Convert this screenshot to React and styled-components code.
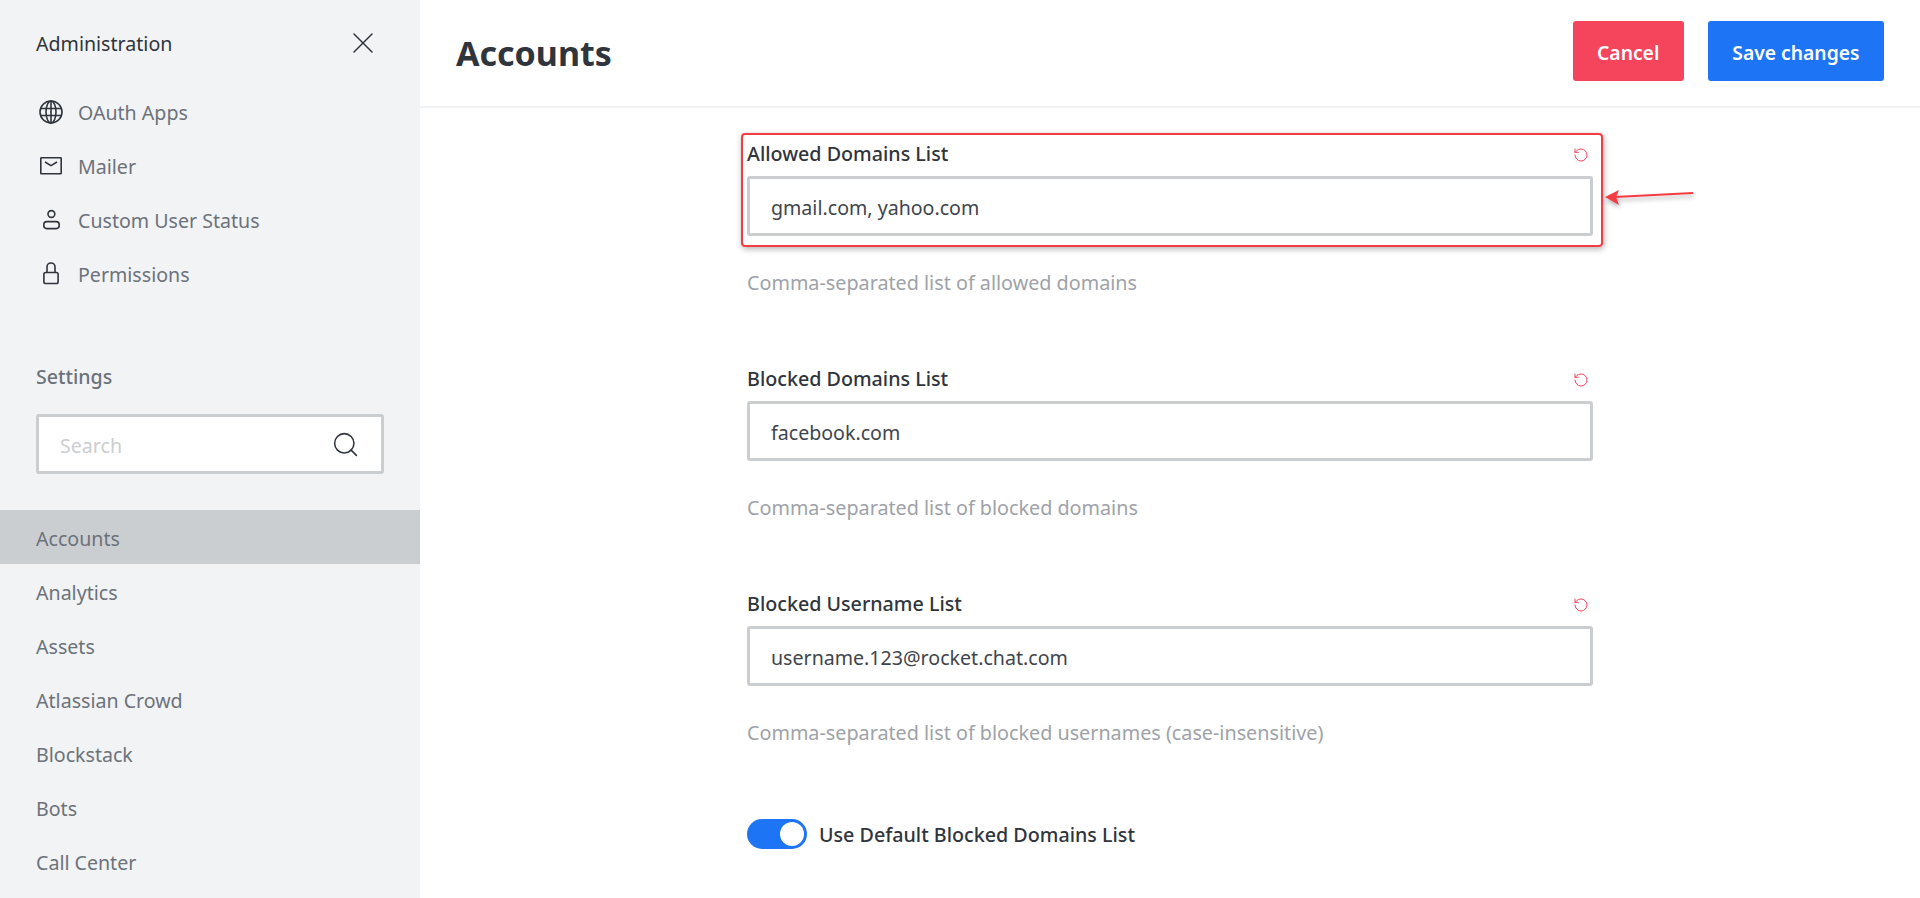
import React from 'react';
import styled, { createGlobalStyle } from 'styled-components';
import { X, Search, RotateCcw } from 'lucide-react';

const GlobalStyle = createGlobalStyle`
  html, body { margin: 0; padding: 0; height: 100%; overflow: hidden; background: #fff; }
  body { font-family: "Noto Sans", "Open Sans", "Liberation Sans", sans-serif; color: #2f343d; }
  * { box-sizing: border-box; }
`;

const adminItems = ['OAuth Apps', 'Mailer', 'Custom User Status', 'Permissions'];
const settingItems = ['Accounts', 'Analytics', 'Assets', 'Atlassian Crowd', 'Blockstack', 'Bots', 'Call Center'];
const fields = [
  { label: 'Allowed Domains List', value: 'gmail.com, yahoo.com', hint: 'Comma-separated list of allowed domains', marked: true },
  { label: 'Blocked Domains List', value: 'facebook.com', hint: 'Comma-separated list of blocked domains' },
  { label: 'Blocked Username List', value: 'username.123@rocket.chat.com', hint: 'Comma-separated list of blocked usernames (case-insensitive)' },
];

function GlobeIcon() {
  return (
    <svg width="24" height="24" viewBox="0 0 24 24" fill="none" stroke="#2f343d" strokeWidth="1.6" overflow="visible">
      <circle cx="13" cy="12" r="11" />
      <ellipse cx="13" cy="12" rx="5" ry="11" />
      <path d="M13 1v22M3 8.5h20M3 15.5h20" />
    </svg>
  );
}

function MailIcon() {
  return (
    <svg width="24" height="24" viewBox="0 0 24 24" fill="none" stroke="#2f343d" strokeWidth="1.6">
      <rect x="2.8" y="3.8" width="20.4" height="16" rx="0.6" />
      <path d="M7 8l6 3.6L19 8" />
    </svg>
  );
}

function UserIcon() {
  return (
    <svg width="24" height="24" viewBox="0 0 24 24" fill="none" stroke="#2f343d" strokeWidth="1.6">
      <circle cx="13.4" cy="6" r="3.4" />
      <rect x="5.8" y="13.6" width="15.4" height="7" rx="3" />
    </svg>
  );
}

function LockIcon() {
  return (
    <svg width="24" height="24" viewBox="0 0 24 24" fill="none" stroke="#2f343d" strokeWidth="1.6">
      <rect x="5.9" y="10.5" width="14.2" height="11" rx="1.8" />
      <path d="M9 10.5V5a4 4 0 0 1 8 0v5.5" />
    </svg>
  );
}

const adminIcons = [<GlobeIcon key="g" />, <MailIcon key="m" />, <UserIcon key="u" />, <LockIcon key="l" />];

export default function App() {
  return (
    <Page>
      <GlobalStyle />
      <Sidebar>
        <AdminHeader>
          <span>Administration</span>
          <X size={36} strokeWidth={1} color="#2f343d" />
        </AdminHeader>
        <AdminList>
          {adminItems.map((item, i) => (
            <AdminRow key={item}>
              <IconSlot>{adminIcons[i]}</IconSlot>
              {item}
            </AdminRow>
          ))}
        </AdminList>
        <SectionTitle>Settings</SectionTitle>
        <SearchBox>
          <SearchText>Search</SearchText>
          <Search size={29} strokeWidth={1.3} color="#2f343d" />
        </SearchBox>
        <SettingList>
          {settingItems.map((item, i) => (
            <SettingRow key={item} $active={i === 0}>{item}</SettingRow>
          ))}
        </SettingList>
      </Sidebar>
      <Main>
        <TopBar>
          <Title>Accounts</Title>
          <Actions>
            <ActionButton $color="#f5455c">Cancel</ActionButton>
            <ActionButton $color="#1d74f5">Save changes</ActionButton>
          </Actions>
        </TopBar>
        <Content>
          <Column>
            {fields.map((f) => (
              <Field key={f.label}>
                <LabelRow>
                  <Label>{f.label}</Label>
                  <ResetIcon size={16} strokeWidth={1.5} color="#f5455c" />
                </LabelRow>
                <TextBox>{f.value}</TextBox>
                <Hint>{f.hint}</Hint>
                {f.marked && (
                  <>
                    <Highlight />
                    <Arrow width="92" height="20" viewBox="0 0 92 20">
                      <path d="M11 9 89 5" stroke="#f53c43" strokeWidth="1.8" fill="none" />
                      <path d="M1 9 15 2l-3 7 3 8z" fill="#f53c43" />
                    </Arrow>
                  </>
                )}
              </Field>
            ))}
            <ToggleRow>
              <Toggle />
              <ToggleLabel>Use Default Blocked Domains List</ToggleLabel>
            </ToggleRow>
          </Column>
        </Content>
      </Main>
    </Page>
  );
}

const Page = styled.div`
  display: flex;
  height: 100vh;
  overflow: hidden;
`;

const Sidebar = styled.aside`
  width: 420px;
  flex: none;
  background: #f2f3f5;
  display: flex;
  flex-direction: column;
`;

const AdminHeader = styled.div`
  display: flex;
  align-items: center;
  justify-content: space-between;
  padding: 28px 39px 0 36px;
  height: 58px;
  font-size: 19.6px;
  color: #2f343d;
`;

const AdminList = styled.div`
  margin-top: 27px;
`;

const AdminRow = styled.div`
  display: flex;
  align-items: center;
  height: 54px;
  padding-left: 38px;
  font-size: 19.6px;
  color: #6c727a;
`;

const IconSlot = styled.span`
  display: flex;
  width: 40px;
  flex: none;
`;

const SectionTitle = styled.div`
  margin-top: 62px;
  padding-left: 36px;
  font-size: 19.6px;
  line-height: 28px;
  font-weight: 500;
  color: #6c727a;
`;

const SearchBox = styled.div`
  margin: 23px 36px 0;
  height: 60px;
  display: flex;
  align-items: center;
  justify-content: space-between;
  padding: 0 21px;
  background: #fff;
  border: 3px solid #cbced1;
  border-radius: 3px;
`;

const SearchText = styled.span`
  padding-top: 2px;
  font-size: 19.6px;
  color: #cbced1;
`;

const SettingList = styled.div`
  margin-top: 36px;
`;

const SettingRow = styled.div`
  height: 54px;
  display: flex;
  align-items: center;
  padding: 2px 0 0 36px;
  font-size: 19.6px;
  color: #6c727a;
  background: ${(p) => (p.$active ? '#cbced1' : 'transparent')};
`;

const Main = styled.main`
  flex: 1;
  min-width: 0;
  display: flex;
  flex-direction: column;
`;

const TopBar = styled.header`
  height: 108px;
  flex: none;
  display: flex;
  align-items: center;
  justify-content: space-between;
  padding: 0 36px;
  border-bottom: 2px solid #f2f3f5;
`;

const Title = styled.h1`
  margin: 0;
  font-size: 34px;
  font-weight: 700;
  color: #2f343d;
`;

const Actions = styled.div`
  display: flex;
  gap: 24px;
  margin-bottom: 5px;
`;

const ActionButton = styled.button`
  height: 60px;
  padding: 3px 24.5px 0;
  border: 0;
  border-radius: 3px;
  background: ${(p) => p.$color};
  color: #fff;
  font-family: inherit;
  font-size: 19.3px;
  font-weight: 600;
`;

const Content = styled.div`
  flex: 1;
  display: flex;
  justify-content: center;
`;

const Column = styled.div`
  width: 846px;
  padding-top: 31px;
`;

const Field = styled.section`
  position: relative;
  margin-bottom: 67px;
`;

const LabelRow = styled.div`
  height: 28px;
  display: flex;
  align-items: center;
  justify-content: space-between;
  padding-right: 4px;
`;

const Label = styled.label`
  font-size: 19.7px;
  font-weight: 500;
  color: #2f343d;
`;

const ResetIcon = styled(RotateCcw)`
  margin-top: 3px;
`;

const TextBox = styled.div`
  margin-top: 9px;
  height: 60px;
  display: flex;
  align-items: center;
  padding: 3px 21px 0;
  border: 3px solid #cbced1;
  border-radius: 3px;
  font-size: 19.6px;
  color: #3f454d;
`;

const Hint = styled.div`
  margin-top: 33px;
  font-size: 19.75px;
  line-height: 28px;
  color: #9ea2a8;
`;

const Highlight = styled.div`
  position: absolute;
  left: -6px;
  right: -10px;
  top: -6px;
  height: 114px;
  border: 2px solid #f53c43;
  border-radius: 4px;
  box-shadow: 1px 2px 6px rgba(0, 0, 0, 0.3);
  pointer-events: none;
`;

const Arrow = styled.svg`
  position: absolute;
  left: 857px;
  top: 49px;
  filter: drop-shadow(1px 3px 2px rgba(0, 0, 0, 0.3));
`;

const ToggleRow = styled.div`
  display: flex;
  align-items: center;
  gap: 12px;
  padding-top: 5px;
`;

const Toggle = styled.span`
  position: relative;
  width: 60px;
  height: 30px;
  border-radius: 15px;
  background: #1d74f5;
  flex: none;
  &::after {
    content: '';
    position: absolute;
    top: 3px;
    right: 3px;
    width: 24px;
    height: 24px;
    border-radius: 50%;
    background: #fff;
  }
`;

const ToggleLabel = styled.span`
  font-size: 19.7px;
  font-weight: 500;
  color: #2f343d;
`;
